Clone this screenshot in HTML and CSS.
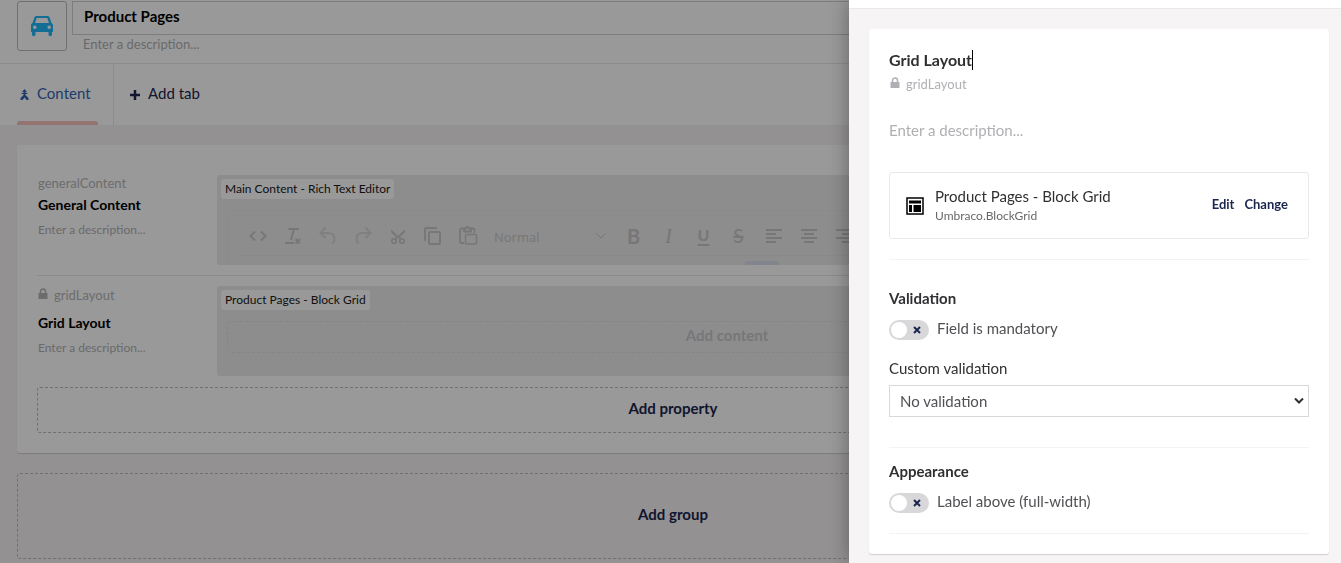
FILE: index.html
```
<!DOCTYPE html>
<html lang="en">
<head>
    <meta charset="utf-8">
    <title>Product Pages</title>
    <link rel="stylesheet" href="styles.css">
</head>
<body>
    <svg class="sprite" aria-hidden="true">
        <symbol id="lock" viewBox="0 0 10 12">
            <path d="M2.500 6V3.500a2.500 2.500 0 0 1 5 0V6" fill="none" stroke="currentColor" stroke-width="1.500"/>
            <rect x="0.500" y="5" width="9" height="6" rx="0.500" fill="currentColor"/>
        </symbol>
    </svg>

    <div class="editor">
        <header class="editor-header">
            <button type="button" class="icon-button" aria-label="Choose icon">
                <svg width="24" height="22" viewBox="0 0 24 22">
                    <path fill="currentColor" fill-rule="evenodd" d="M7 1h10c1.500 0 2.300.6 2.800 2l1.700 5c1 .5 1.500 1.400 1.500 2.500V17h-1v2.500a1.700 1.700 0 0 1-3.500 0V17h-13v2.500a1.700 1.700 0 0 1-3.500 0V17H1v-6.500C1 9.400 1.500 8.500 2.500 8l1.700-5C4.700 1.600 5.500 1 7 1zm-.3 2L5 8h14l-1.700-5zM4.800 10.500a1.800 1.800 0 1 0 0 3.600 1.800 1.800 0 0 0 0-3.600zm14.400 0a1.800 1.800 0 1 0 0 3.600 1.800 1.800 0 0 0 0-3.600z"/>
                </svg>
            </button>
            <div class="name-fields">
                <input type="text" class="name-input" value="Product Pages" aria-label="Name">
                <input type="text" class="description-input" placeholder="Enter a description..." aria-label="Description">
            </div>
        </header>

        <nav class="tabs">
            <button type="button" class="tab active">
                <svg width="9" height="11" viewBox="0 0 9 11">
                    <path d="M4.500 0 7 3H5.500V4H7.500V5H5.500V6L8.500 9V11H6.500L4.500 8.500 2.500 11H.5V9L3.500 6V5H1.500V4H3.500V3H2z" fill="currentColor"/>
                </svg>
                <span>Content</span>
            </button>
            <button type="button" class="tab tab-add">
                <svg width="10" height="10" viewBox="0 0 10 10">
                    <path d="M5 0v10M0 5h10" stroke="currentColor" stroke-width="2.500"/>
                </svg>
                <span>Add tab</span>
            </button>
        </nav>

        <main class="content">
            <section class="group">
                <div class="property">
                    <div class="property-info">
                        <span class="property-alias">generalContent</span>
                        <input type="text" class="property-name" value="General Content" aria-label="Property name">
                        <input type="text" class="property-description" placeholder="Enter a description..." aria-label="Property description">
                    </div>
                    <div class="preview">
                        <span class="preview-label">Main Content - Rich Text Editor</span>
                        <div class="rte">
                            <div class="toolbar">
                                <button type="button" aria-label="Source code"><svg viewBox="0 0 24 24"><path d="M9 7.500 4.500 12 9 16.500M15 7.500 19.500 12 15 16.500"/></svg></button>
                                <button type="button" aria-label="Clear formatting"><svg viewBox="0 0 24 24"><path d="M7.500 5H18M13 5 10 16M4 19h9M14.500 15l4.500 4.500M19 15l-4.500 4.500"/></svg></button>
                                <button type="button" aria-label="Undo" disabled><svg viewBox="0 0 24 24"><path d="M9.500 3.500 4.500 9l5 5M4.500 9H12c4 0 6.500 2 6.500 6 0 2-.8 3.500-2.500 4.500"/></svg></button>
                                <button type="button" aria-label="Redo" disabled><svg viewBox="0 0 24 24"><path d="M14.500 3.500l5 5.500-5 5M19.500 9H12c-4 0-6.500 2-6.500 6 0 2 .8 3.500 2.500 4.500"/></svg></button>
                                <button type="button" aria-label="Cut"><svg viewBox="0 0 24 24"><path d="M5.300 5.500c-.5 2 .2 3.200 1 4L12 14.500l5.700-5c.8-.8 1.500-2 1-4L12 12z" fill="currentColor" stroke="none"/><path d="M10 13v4M14 13v4" stroke-width="1.500"/><circle cx="8" cy="17" r="2.300" stroke-width="1.600"/><circle cx="16" cy="17" r="2.300" stroke-width="1.600"/></svg></button>
                                <button type="button" aria-label="Copy"><svg viewBox="0 0 24 24"><path d="M16 4H5.500C4.600 4 4 4.600 4 5.500V17"/><rect x="8" y="8" width="11" height="12" rx="1"/></svg></button>
                                <button type="button" aria-label="Paste"><svg viewBox="0 0 24 24"><path d="M8 19H5.500c-1 0-1.500-.5-1.500-1.500V6c0-1 .5-1.500 1.500-1.500H8M15 4.500h2c1 0 1.500.5 1.500 1.500v3M8 4.500V7.500h7V4.500h-2a1.500 1.500 0 0 0-3 0z" stroke-width="1.800"/><rect x="9.500" y="10.500" width="11" height="9.500" rx="1" stroke-width="1.500"/></svg></button>
                                <button type="button" class="format"><span>Normal</span><svg class="chevron" viewBox="0 0 12 12"><path d="M1.500 3.500 6 8l4.500-4.500"/></svg></button>
                                <button type="button" class="bold" aria-label="Bold">B</button>
                                <button type="button" class="italic" aria-label="Italic">I</button>
                                <button type="button" class="underline" aria-label="Underline">U</button>
                                <button type="button" class="strike" aria-label="Strikethrough">S</button>
                                <button type="button" aria-label="Align left"><svg viewBox="0 0 24 24"><path d="M4 6h16M4 10h10M4 14h16M4 18h10"/></svg></button>
                                <button type="button" aria-label="Align center"><svg viewBox="0 0 24 24"><path d="M4 6h16M7 10h10M4 14h16M7 18h10"/></svg></button>
                                <button type="button" aria-label="Align right"><svg viewBox="0 0 24 24"><path d="M4 6h16M10 10h10M4 14h16M10 18h10"/></svg></button>
                            </div>
                            <div class="drag-handle"></div>
                        </div>
                    </div>
                </div>

                <div class="property">
                    <div class="property-info">
                        <span class="property-alias locked"><svg class="lock"><use href="#lock"/></svg>gridLayout</span>
                        <input type="text" class="property-name" value="Grid Layout" aria-label="Property name">
                        <input type="text" class="property-description" placeholder="Enter a description..." aria-label="Property description">
                    </div>
                    <div class="preview">
                        <span class="preview-label">Product Pages - Block Grid</span>
                        <button type="button" class="add-content">Add content</button>
                    </div>
                </div>

                <button type="button" class="add-property">Add property</button>
            </section>

            <button type="button" class="add-group">Add group</button>
        </main>
    </div>

    <div class="backdrop"></div>

    <aside class="panel">
        <div class="panel-header"></div>
        <form class="card">
            <input type="text" class="card-name" value="Grid Layout" aria-label="Name">
            <span class="card-alias"><svg class="lock"><use href="#lock"/></svg>gridLayout</span>
            <input type="text" class="card-description" placeholder="Enter a description..." aria-label="Description">

            <div class="data-type">
                <svg width="18" height="18" viewBox="0 0 18 18">
                    <rect x="1" y="1" width="16" height="16" fill="none" stroke="currentColor" stroke-width="1.500"/>
                    <path d="M3 3.500h12v3H3zM3 8h3v7H3zM7.500 8H15v7H7.500z" fill="currentColor"/>
                </svg>
                <div class="data-type-text">
                    <span class="data-type-name">Product Pages - Block Grid</span>
                    <small>Umbraco.BlockGrid</small>
                </div>
                <div class="data-type-actions">
                    <button type="button">Edit</button>
                    <button type="button">Change</button>
                </div>
            </div>

            <section class="settings validation">
                <h5>Validation</h5>
                <label class="toggle">
                    <input type="checkbox">
                    <span class="slider"><svg width="8" height="8" viewBox="0 0 8 8"><path d="M1 1l6 6M7 1 1 7"/></svg></span>
                    <span class="toggle-text">Field is mandatory</span>
                </label>
                <label class="select-label" for="customValidation">Custom validation</label>
                <div class="select-wrap">
                    <select id="customValidation">
                        <option>No validation</option>
                    </select>
                    <svg width="10" height="8" viewBox="0 0 10 8"><path d="M1 1.500 5 5.500l4-4"/></svg>
                </div>
            </section>

            <section class="settings appearance">
                <h5>Appearance</h5>
                <label class="toggle">
                    <input type="checkbox">
                    <span class="slider"><svg width="8" height="8" viewBox="0 0 8 8"><path d="M1 1l6 6M7 1 1 7"/></svg></span>
                    <span class="toggle-text">Label above (full-width)</span>
                </label>
            </section>
        </form>
    </aside>
</body>
</html>
```

FILE: styles.css
```
* {
    box-sizing: border-box;
}

body {
    margin: 0;
    height: 100vh;
    overflow: hidden;
    background-color: #f6f2f3;
    font-family: Lato, sans-serif;
    font-size: 15px;
    line-height: 20px;
    color: #303033;
}

button,
input,
select {
    font: inherit;
    color: inherit;
    margin: 0;
    padding: 0;
    border: none;
    background: none;
}

button {
    cursor: pointer;
}

input:focus {
    outline: none;
}

.sprite {
    display: none;
}

.lock {
    width: 10px;
    height: 12px;
    margin-bottom: 2px;
}

/* header */
.editor-header {
    display: flex;
    gap: 5px;
    padding: 1px 12px 10px 17px;
    background-color: #fff;
    border-bottom: 1px solid #e9e9eb;
}

.icon-button {
    display: flex;
    align-items: center;
    justify-content: center;
    width: 50px;
    height: 50px;
    border: 1px solid #bbbabf;
    border-radius: 3px;
    color: #1fb8f8;
}

.name-fields {
    flex: 1;
    display: flex;
    flex-direction: column;
}

.name-input {
    height: 34px;
    padding: 0 11px 4px;
    border: 1px solid #d0d0d3;
    font-weight: bold;
    color: #000;
}

.description-input {
    height: 18px;
    padding: 0 11px;
    font-size: 13px;
}

::placeholder {
    color: #b0b0b3;
    opacity: 1;
}

/* tabs */
.tabs {
    display: flex;
    height: 61px;
    background-color: #fff;
}

.tab {
    display: flex;
    align-items: center;
    gap: 8px;
    color: #1b264f;
}

.tab span {
    padding-bottom: 3px;
}

.tab.active {
    width: 114px;
    padding: 0 16px 0 20px;
    border-right: 1px solid #e9e9eb;
    color: #3564b4;
    position: relative;
}

.tab.active::after {
    content: "";
    position: absolute;
    left: 17px;
    right: 15px;
    bottom: 0;
    height: 4px;
    border-radius: 3px 3px 0 0;
    background-color: #f5c1bc;
}

.tab-add {
    padding: 0 16px;
}

/* groups and properties */
.content {
    padding: 20px 12px 20px 17px;
}

.group {
    padding: 30px 20px 20px;
    background-color: #fff;
    border-radius: 3px;
    box-shadow: 0 1px 1px rgba(0, 0, 0, 0.16);
}

.property {
    display: flex;
    gap: 20px;
    padding-bottom: 10px;
}

.property + .property {
    padding-top: 10px;
    border-top: 1px solid #e9e9eb;
}

.property-info {
    width: 160px;
    display: flex;
    flex-direction: column;
}

.property-alias {
    display: flex;
    align-items: center;
    gap: 6px;
    height: 16px;
    padding-left: 1px;
    font-size: 13px;
    color: #b5b5b8;
}

.property-alias.locked {
    height: 18px;
    margin-bottom: 5px;
}

.property-name {
    height: 26px;
    padding-left: 1px;
    font-size: 14px;
    font-weight: bold;
    color: #000;
}

.property-description {
    height: 24px;
    padding-left: 1px;
    font-size: 12px;
}

.preview {
    flex: 1;
    height: 90px;
    margin-right: 72px;
    padding: 4px 10px 0;
    overflow: hidden;
    border-radius: 3px;
    background-color: #ebebeb;
}

.preview-label {
    display: block;
    width: max-content;
    margin: 0 0 11px -6px;
    padding: 0 4px;
    border-radius: 3px;
    background-color: #fff;
    font-size: 12px;
    color: #1a1a1a;
}

.rte {
    height: 90px;
    border: 1px solid #e7e7e7;
    border-radius: 6px 6px 0 0;
}

.toolbar {
    display: flex;
    align-items: center;
    height: 45px;
    margin-left: 12px;
    padding-top: 6px;
    border-bottom: 1px solid #e5e5e5;
    color: #c6c6c8;
}

.toolbar button {
    flex: none;
    width: 35px;
    height: 28px;
    font-size: 20px;
}

.toolbar svg {
    display: block;
    width: 24px;
    height: 24px;
    margin: 0 auto;
    fill: none;
    stroke: currentColor;
    stroke-width: 2;
}

.toolbar button:disabled {
    color: #d5d5d7;
}

.toolbar .format {
    display: flex;
    align-items: center;
    justify-content: space-between;
    width: 131px;
    padding: 2px 9px 0 9px;
    font-family: "Open Sans", sans-serif;
    font-size: 13px;
}

.toolbar .chevron {
    width: 12px;
    height: 12px;
    margin: 0 0 2px;
    stroke-width: 1;
}

.toolbar .bold {
    font-weight: bold;
}

.toolbar .italic {
    font-family: "Liberation Serif", serif;
    font-style: italic;
}

.toolbar .underline {
    padding-bottom: 2px;
    font-size: 16px;
    font-weight: bold;
    text-decoration: underline 2px;
    text-underline-offset: 3px;
}

.toolbar .strike {
    font-size: 19px;
    text-decoration: line-through 2px;
}

.drag-handle {
    width: 34px;
    height: 8px;
    margin: 5px auto 0 517px;
    border-radius: 3px;
    background-color: #d8dfea;
}

.add-content {
    display: block;
    width: 100%;
    height: 32px;
    padding-bottom: 4px;
    border: 1px dashed #dededf;
    border-radius: 3px;
    font-weight: bold;
    color: #c6c6ca;
}

.add-property,
.add-group {
    display: block;
    width: 100%;
    padding-bottom: 4px;
    border: 1px dashed #bbbabf;
    border-radius: 3px;
    font-weight: bold;
    color: #1b264f;
}

.add-property {
    height: 46px;
    margin-top: 1px;
}

.add-group {
    height: 86px;
    margin-top: 20px;
}

.backdrop {
    position: fixed;
    inset: 0;
    background-color: rgba(0, 0, 0, 0.4);
}

/* settings panel */
.panel {
    position: fixed;
    top: 0;
    right: 0;
    bottom: 0;
    width: 492px;
    background-color: #f6f4f5;
    box-shadow: 0 0 20px rgba(0, 0, 0, 0.36);
}

.panel-header {
    height: 9px;
    background-color: #fff;
    border-bottom: 1px solid #e9e9eb;
}

.card {
    display: flex;
    flex-direction: column;
    margin: 20px 12px 0 20px;
    padding: 21px 20px 20px;
    background-color: #fff;
    border-radius: 3px;
    box-shadow: 0 1px 1px rgba(0, 0, 0, 0.16);
}

/* the right border is the caret, the field is as wide as its text */
.card-name {
    align-self: flex-start;
    field-sizing: content;
    height: 20px;
    border-right: 1px solid #000;
    caret-color: transparent;
    font-size: 16px;
    line-height: 20px;
    font-weight: bold;
}

.card-alias {
    display: flex;
    align-items: center;
    gap: 6px;
    height: 20px;
    margin-top: 4px;
    padding-left: 1px;
    font-size: 13px;
    color: #b0b0b4;
}

.card-description {
    height: 20px;
    margin: 26px 0 32px;
}

.data-type {
    display: flex;
    align-items: center;
    gap: 11px;
    height: 67px;
    padding: 0 20px 0 16px;
    border: 1px solid #e9e9eb;
    border-radius: 3px;
    color: #000;
}

.data-type-text {
    flex: 1;
    display: flex;
    flex-direction: column;
    color: #303033;
}

.data-type-text small {
    font-size: 12px;
    color: #68676b;
}

.data-type-actions {
    display: flex;
    gap: 10px;
    padding-bottom: 3px;
}

.data-type-actions button {
    font-size: 13px;
    font-weight: bold;
    color: #1b264f;
}

.settings {
    border-top: 1px solid #f3f3f5;
}

.validation {
    margin-top: 20px;
    padding: 28px 0 30px;
}

.appearance {
    padding: 13px 0 20px;
    border-bottom: 1px solid #f3f3f5;
}

.settings h5 {
    margin: 0 0 12px;
    font-size: 15px;
    font-weight: bold;
}

.toggle {
    display: flex;
    align-items: center;
    gap: 8px;
    height: 20px;
    color: #515054;
}

.toggle input {
    position: absolute;
    opacity: 0;
}

.toggle-text {
    padding-bottom: 4px;
}

.slider {
    display: flex;
    align-items: center;
    justify-content: space-between;
    width: 40px;
    height: 20px;
    padding: 0 8px 0 2px;
    border-radius: 10px;
    background-color: #d8d7d9;
}

.slider::before {
    content: "";
    width: 16px;
    height: 16px;
    border-radius: 50%;
    background-color: #fff;
}

.slider svg {
    stroke: #1b264f;
    stroke-width: 2;
}

.select-label {
    display: block;
    margin: 18px 0 7px;
}

.select-wrap {
    display: grid;
    align-items: center;
}

.select-wrap select,
.select-wrap svg {
    grid-area: 1 / 1;
}

.select-wrap select {
    width: 100%;
    height: 32px;
    padding: 0 10px 1px;
    border: 1px solid #d8d7d9;
    appearance: none;
    color: #515054;
}

.select-wrap svg {
    justify-self: end;
    margin-right: 5px;
    fill: none;
    stroke: #303033;
    stroke-width: 2;
    pointer-events: none;
}
```
